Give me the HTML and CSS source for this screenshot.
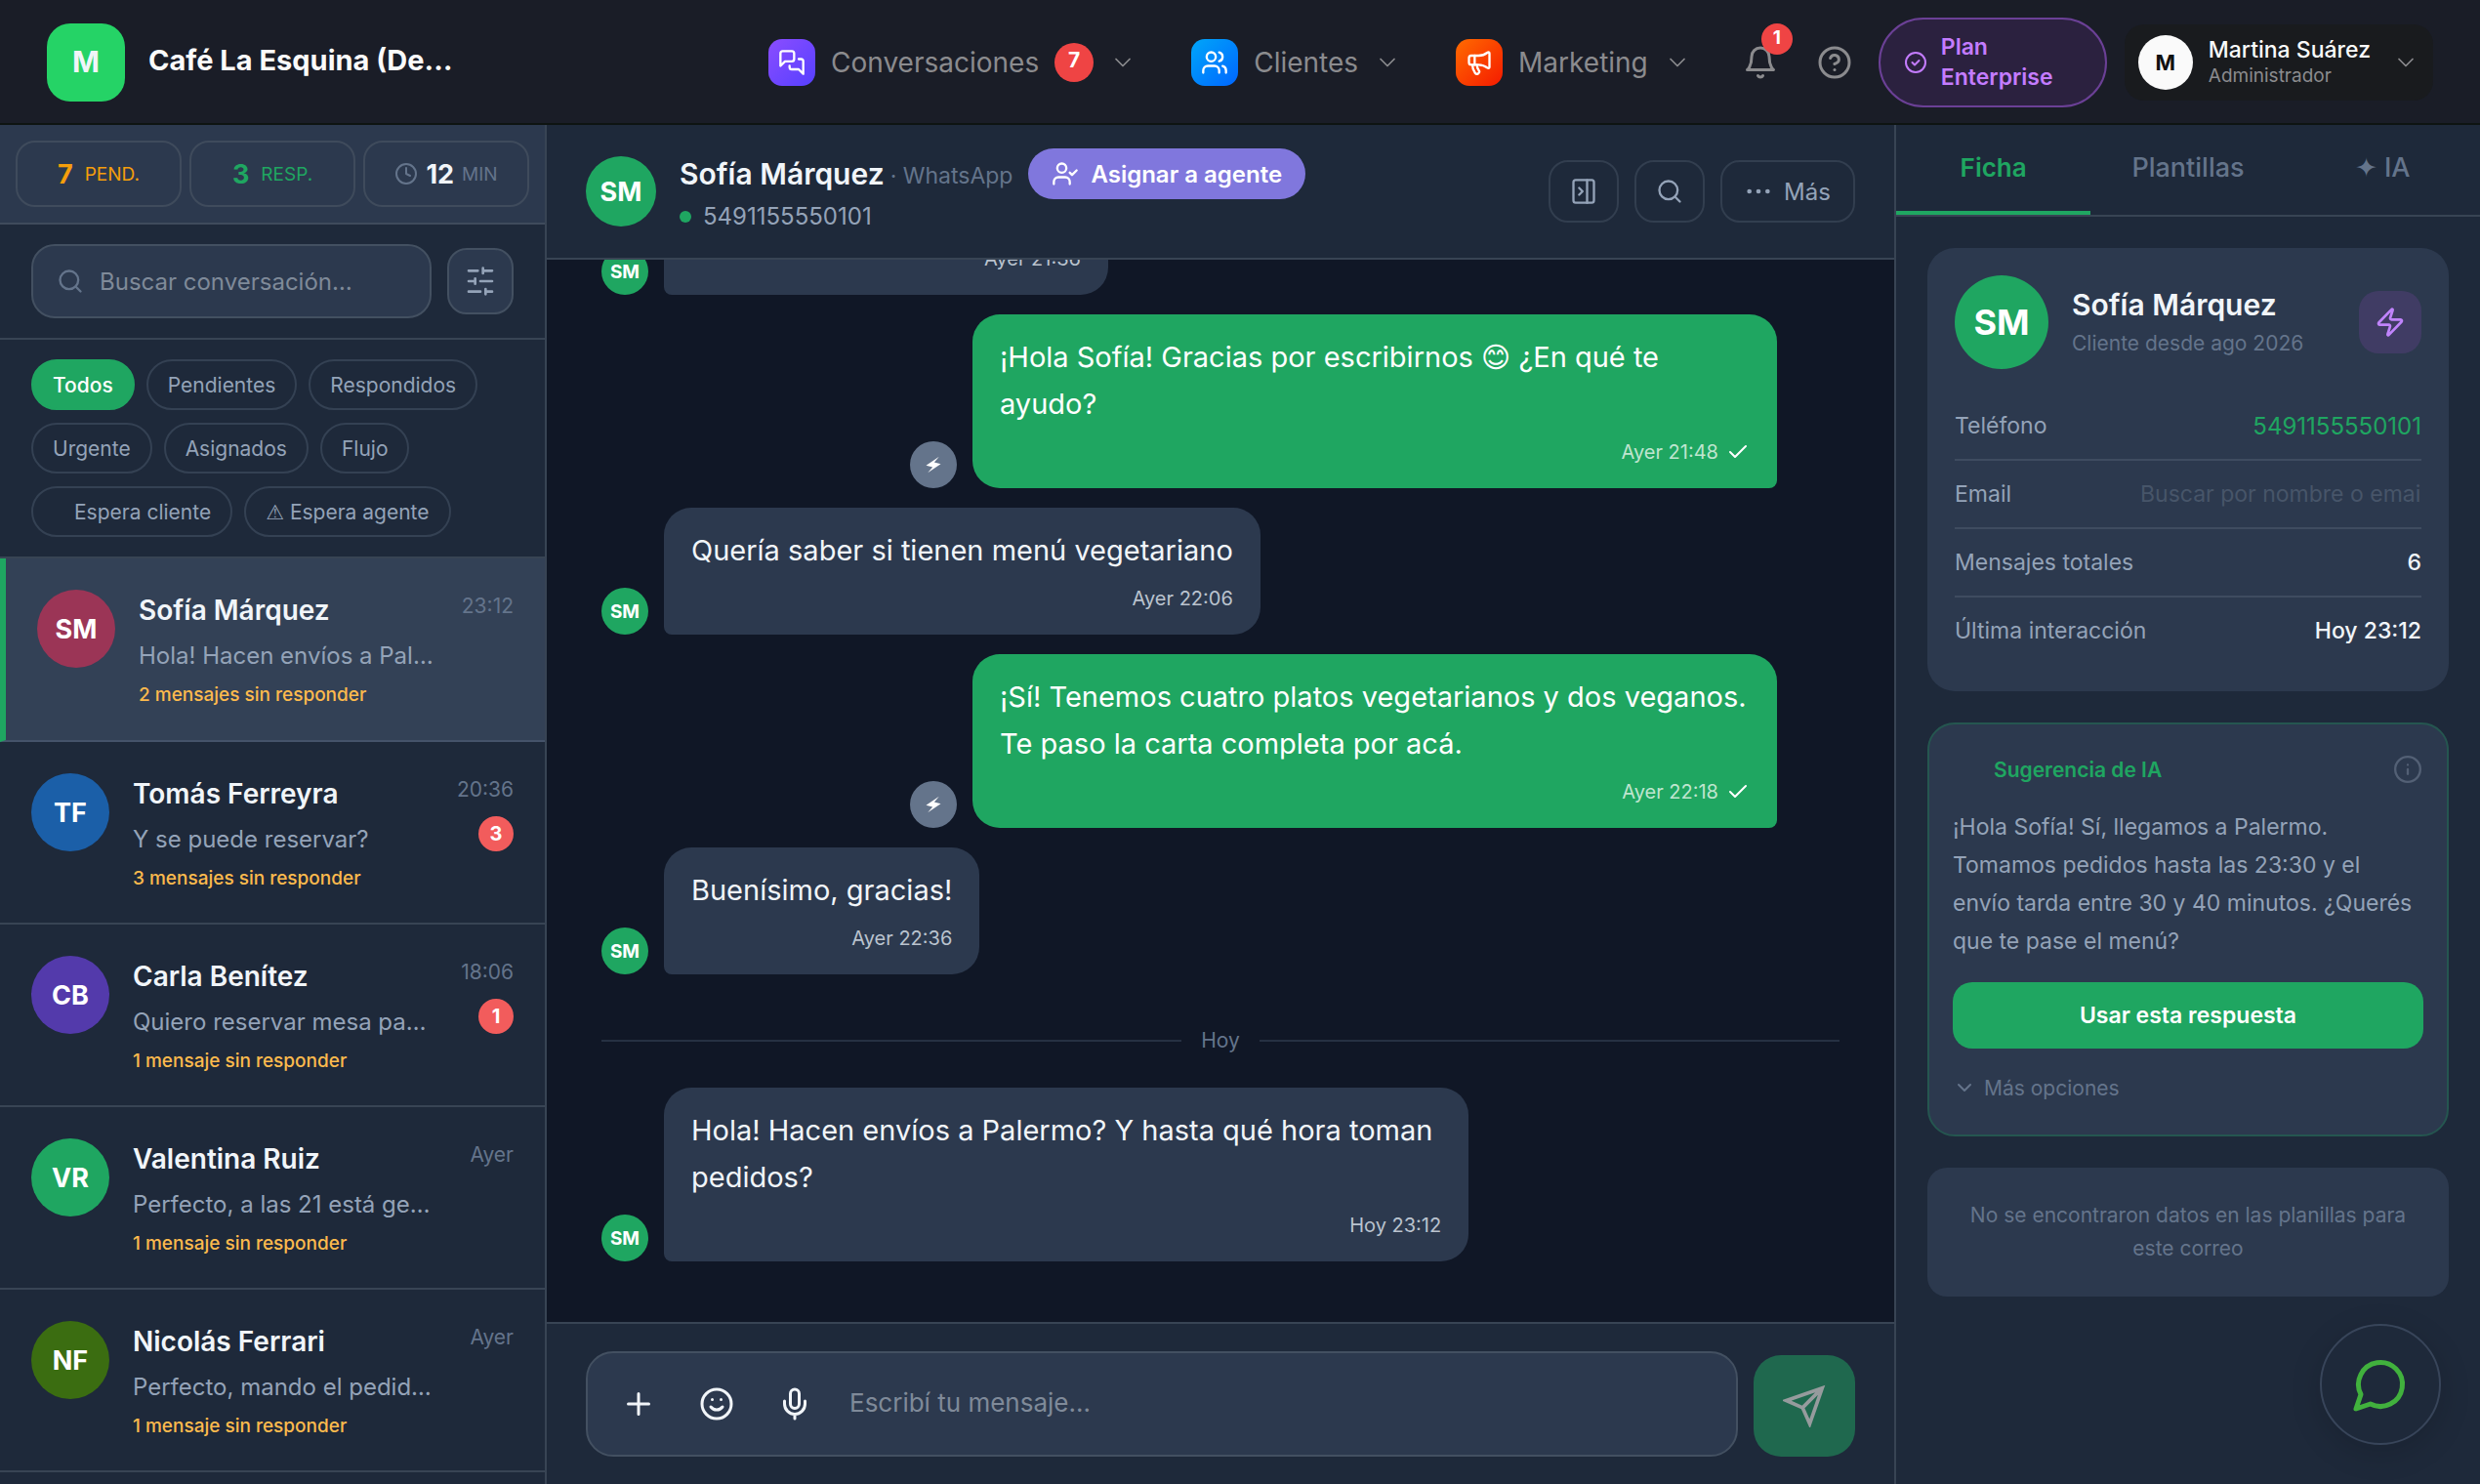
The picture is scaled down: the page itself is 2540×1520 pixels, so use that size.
FILE: index.html
```
<!DOCTYPE html>
<html lang="es">
<head>
    <meta charset="UTF-8">
    <meta name="viewport" content="width=device-width, initial-scale=1">
    <title>Conversaciones - Café La Esquina</title>
    <link rel="stylesheet" href="styles.css">
</head>
<body>
    <!-- iconos compartidos -->
    <svg class="sprite" aria-hidden="true">
        <symbol id="i-chevron" viewBox="0 0 24 24"><path d="m6 9 6 6 6-6"/></symbol>
        <symbol id="i-search" viewBox="0 0 24 24"><circle cx="11" cy="11" r="8"/><path d="m21 21-4.3-4.3"/></symbol>
        <symbol id="i-check" viewBox="0 0 24 24"><path d="M20 6 9 17l-5-5"/></symbol>
        <symbol id="i-bolt" viewBox="0 0 24 24"><path d="M4 14a1 1 0 0 1-.78-1.63l9.9-10.2a.5.5 0 0 1 .86.46l-1.92 6.02A1 1 0 0 0 13 10h7a1 1 0 0 1 .78 1.63l-9.9 10.2a.5.5 0 0 1-.86-.46l1.92-6.02A1 1 0 0 0 11 14z"/></symbol>
        <symbol id="i-flash" viewBox="0 0 24 24"><path d="M19 2 3 13l8 2-6 7L21 11l-8-2z"/></symbol>
    </svg>

    <header class="topbar">
        <div class="brand">
            <div class="brand-logo">M</div>
            <div class="brand-name">Café La Esquina (De…</div>
        </div>

        <nav class="nav">
            <button class="nav-item">
                <span class="nav-icon purple"><svg class="icon s28" viewBox="0 0 24 24"><path d="M14 9a2 2 0 0 1-2 2H6l-4 4V4a2 2 0 0 1 2-2h8a2 2 0 0 1 2 2z"/><path d="M18 9h2a2 2 0 0 1 2 2v11l-4-4h-6a2 2 0 0 1-2-2v-1"/></svg></span>
                <span>Conversaciones</span>
                <span class="nav-badge">7</span>
                <svg class="icon s28 thin"><use href="#i-chevron"/></svg>
            </button>
            <button class="nav-item">
                <span class="nav-icon blue"><svg class="icon s28" viewBox="0 0 24 24"><path d="M16 21v-2a4 4 0 0 0-4-4H6a4 4 0 0 0-4 4v2"/><circle cx="9" cy="7" r="4"/><path d="M22 21v-2a4 4 0 0 0-3-3.870"/><path d="M16 3.130a4 4 0 0 1 0 7.750"/></svg></span>
                <span>Clientes</span>
                <svg class="icon s28 thin"><use href="#i-chevron"/></svg>
            </button>
            <button class="nav-item">
                <span class="nav-icon orange"><svg class="icon s28" viewBox="0 0 24 24"><path d="M11 6a13 13 0 0 0 8.400-2.800A1 1 0 0 1 21 4v12a1 1 0 0 1-1.600.8A13 13 0 0 0 11 14H5a2 2 0 0 1-2-2V8a2 2 0 0 1 2-2z"/><path d="M6 14a12 12 0 0 0 2.400 7.200 2 2 0 0 0 3.200-2.400A8 8 0 0 1 10 14"/><path d="M8 6v8"/></svg></span>
                <span>Marketing</span>
                <svg class="icon s28 thin"><use href="#i-chevron"/></svg>
            </button>
        </nav>

        <div class="topbar-actions">
            <button class="top-icon" aria-label="Notificaciones">
                <svg class="icon s36" viewBox="0 0 24 24"><path d="M6 8a6 6 0 0 1 12 0c0 7 3 9 3 9H3s3-2 3-9"/><path d="M10.300 21a1.940 1.940 0 0 0 3.400 0"/></svg>
                <span class="bell-badge">1</span>
            </button>
            <button class="top-icon" aria-label="Ayuda">
                <svg class="icon s36" viewBox="0 0 24 24"><circle cx="12" cy="12" r="10"/><path d="M9.090 9a3 3 0 0 1 5.830 1c0 2-3 3-3 3"/><path d="M12 17h.01"/></svg>
            </button>
            <a href="#" class="plan">
                <svg class="icon s24" viewBox="0 0 24 24"><circle cx="12" cy="12" r="10"/><path d="m8.500 12 2.500 2.500 4.500-4.500"/></svg>
                <span>Plan<br>Enterprise</span>
            </a>
            <button class="profile">
                <span class="profile-avatar">M</span>
                <span class="profile-text">
                    <span class="profile-name">Martina Suárez</span>
                    <span class="profile-role">Administrador</span>
                </span>
                <svg class="icon s28 thin"><use href="#i-chevron"/></svg>
            </button>
        </div>
    </header>

    <div class="layout">
        <!-- lista de conversaciones -->
        <aside class="sidebar">
            <div class="stats">
                <div class="stat orange-text"><b>7</b><span>PEND.</span></div>
                <div class="stat green-text"><b>3</b><span>RESP.</span></div>
                <div class="stat min"><svg class="icon s24" viewBox="0 0 24 24"><circle cx="12" cy="12" r="10"/><path d="M12 6v6l4 2"/></svg><b>12</b><span>MIN</span></div>
            </div>

            <div class="search-row">
                <label class="search">
                    <svg class="icon s28"><use href="#i-search"/></svg>
                    <input type="text" placeholder="Buscar conversación…" aria-label="Buscar conversación">
                </label>
                <button class="filter-btn" aria-label="Filtros">
                    <svg class="icon s32" viewBox="0 0 24 24"><path d="M21 4h-7M10 4H3M21 12h-9M8 12H3M21 20h-5M12 20H3M14 2v4M8 10v4M16 18v4"/></svg>
                </button>
            </div>

            <div class="chips">
                <button class="chip active">Todos</button>
                <button class="chip">Pendientes</button>
                <button class="chip">Respondidos</button>
                <button class="chip">Urgente</button>
                <button class="chip">Asignados</button>
                <button class="chip">Flujo</button>
                <button class="chip chip-blank">Espera cliente</button>
                <button class="chip"><span class="emoji">⚠</span> Espera agente</button>
            </div>

            <div class="conv-list">
                <div class="conv selected">
                    <div class="avatar wine">SM</div>
                    <div class="conv-body">
                        <div class="conv-name">Sofía Márquez</div>
                        <div class="conv-preview">Hola! Hacen envíos a Pal…</div>
                        <div class="conv-warn">2 mensajes sin responder</div>
                    </div>
                    <div class="conv-side"><span>23:12</span></div>
                </div>
                <div class="conv">
                    <div class="avatar azul">TF</div>
                    <div class="conv-body">
                        <div class="conv-name">Tomás Ferreyra</div>
                        <div class="conv-preview">Y se puede reservar?</div>
                        <div class="conv-warn">3 mensajes sin responder</div>
                    </div>
                    <div class="conv-side"><span>20:36</span><span class="count">3</span></div>
                </div>
                <div class="conv">
                    <div class="avatar violeta">CB</div>
                    <div class="conv-body">
                        <div class="conv-name">Carla Benítez</div>
                        <div class="conv-preview">Quiero reservar mesa pa…</div>
                        <div class="conv-warn">1 mensaje sin responder</div>
                    </div>
                    <div class="conv-side"><span>18:06</span><span class="count">1</span></div>
                </div>
                <div class="conv">
                    <div class="avatar">VR</div>
                    <div class="conv-body">
                        <div class="conv-name">Valentina Ruiz</div>
                        <div class="conv-preview">Perfecto, a las 21 está ge…</div>
                        <div class="conv-warn">1 mensaje sin responder</div>
                    </div>
                    <div class="conv-side"><span>Ayer</span></div>
                </div>
                <div class="conv">
                    <div class="avatar oliva">NF</div>
                    <div class="conv-body">
                        <div class="conv-name">Nicolás Ferrari</div>
                        <div class="conv-preview">Perfecto, mando el pedid…</div>
                        <div class="conv-warn">1 mensaje sin responder</div>
                    </div>
                    <div class="conv-side"><span>Ayer</span></div>
                </div>
            </div>
        </aside>

        <!-- chat -->
        <main class="chat">
            <div class="chat-head">
                <div class="avatar head">SM</div>
                <div class="chat-who">
                    <div class="chat-title">
                        <h1>Sofía Márquez</h1>
                        <span class="channel">· WhatsApp</span>
                        <button class="assign"><svg class="icon s28" viewBox="0 0 24 24"><path d="M16 21v-2a4 4 0 0 0-4-4H6a4 4 0 0 0-4 4v2"/><circle cx="9" cy="7" r="4"/><path d="m16 11 2 2 4-4"/></svg>Asignar a agente</button>
                    </div>
                    <div class="chat-phone"><i class="dot"></i>5491155550101</div>
                </div>
                <div class="chat-tools">
                    <button class="tool" aria-label="Ocultar panel"><svg class="icon s28" viewBox="0 0 24 24"><rect x="3" y="2" width="18" height="20" rx="2"/><path d="M15 2v20M8 9l3 3-3 3"/></svg></button>
                    <button class="tool" aria-label="Buscar"><svg class="icon s28"><use href="#i-search"/></svg></button>
                    <button class="tool wide"><svg class="icon s28 heavy" viewBox="0 0 24 24"><path d="M4 12h.01M12 12h.01M20 12h.01"/></svg>Más</button>
                </div>
            </div>

            <div class="messages">
                <div class="msg in">
                    <div class="avatar mini">SM</div>
                    <div class="bubble">Hola! Están abiertos mañana!<div class="time">Ayer 21:36</div></div>
                </div>
                <div class="msg out">
                    <div class="avatar mini bot"><svg class="s20"><use href="#i-flash"/></svg></div>
                    <div class="bubble">¡Hola Sofía! Gracias por escribirnos <span class="emoji">😊</span> ¿En qué te ayudo?<div class="time">Ayer 21:48 <svg class="icon s24 tick"><use href="#i-check"/></svg></div></div>
                </div>
                <div class="msg in">
                    <div class="avatar mini">SM</div>
                    <div class="bubble">Quería saber si tienen menú vegetariano<div class="time">Ayer 22:06</div></div>
                </div>
                <div class="msg out">
                    <div class="avatar mini bot"><svg class="s20"><use href="#i-flash"/></svg></div>
                    <div class="bubble">¡Sí! Tenemos cuatro platos vegetarianos y dos veganos. Te paso la carta completa por acá.<div class="time">Ayer 22:18 <svg class="icon s24 tick"><use href="#i-check"/></svg></div></div>
                </div>
                <div class="msg in">
                    <div class="avatar mini">SM</div>
                    <div class="bubble">Buenísimo, gracias!<div class="time">Ayer 22:36</div></div>
                </div>
                <div class="day">Hoy</div>
                <div class="msg in">
                    <div class="avatar mini">SM</div>
                    <div class="bubble">Hola! Hacen envíos a Palermo? Y hasta qué hora toman pedidos?<div class="time">Hoy 23:12</div></div>
                </div>
            </div>

            <form class="composer">
                <div class="composer-box">
                    <button type="button" aria-label="Adjuntar"><svg class="icon s36" viewBox="0 0 24 24"><path d="M5 12h14M12 5v14"/></svg></button>
                    <button type="button" aria-label="Emojis"><svg class="icon s36" viewBox="0 0 24 24"><circle cx="12" cy="12" r="10"/><path d="M8 14s1.500 2 4 2 4-2 4-2M9 9h.01M15 9h.01"/></svg></button>
                    <button type="button" aria-label="Grabar audio"><svg class="icon s36" viewBox="0 0 24 24"><rect x="9" y="2" width="6" height="13" rx="3"/><path d="M19 10v2a7 7 0 0 1-14 0v-2M12 19v3"/></svg></button>
                    <input type="text" placeholder="Escribí tu mensaje…" aria-label="Mensaje">
                </div>
                <button type="submit" class="send" aria-label="Enviar"><svg class="icon s44" viewBox="0 0 24 24"><path class="sharp" d="M22 2 11 13M22 2l-7 20-4-9-9-4z"/></svg></button>
            </form>
        </main>

        <!-- ficha del cliente -->
        <aside class="panel">
            <div class="tabs">
                <button class="tab active">Ficha</button>
                <button class="tab">Plantillas</button>
                <button class="tab">✦ IA</button>
            </div>
            <div class="panel-body">
                <section class="card client">
                    <div class="client-head">
                        <div class="avatar big">SM</div>
                        <div class="client-text">
                            <h2>Sofía Márquez</h2>
                            <p>Cliente desde ago 2026</p>
                        </div>
                        <button class="bolt-btn" aria-label="Acciones rápidas"><svg class="icon s32"><use href="#i-bolt"/></svg></button>
                    </div>
                    <div class="row"><span>Teléfono</span><a href="#">5491155550101</a></div>
                    <div class="row"><label for="email">Email</label><input id="email" type="text" placeholder="Buscar por nombre o email"></div>
                    <div class="row"><span>Mensajes totales</span><strong>6</strong></div>
                    <div class="row"><span>Última interacción</span><strong>Hoy 23:12</strong></div>
                </section>

                <section class="card ai">
                    <div class="ai-head">
                        <h3>Sugerencia de IA</h3>
                        <svg class="icon s28" viewBox="0 0 24 24"><circle cx="12" cy="12" r="11"/><path d="M12 16v-4M12 8h.01"/></svg>
                    </div>
                    <p>¡Hola Sofía! Sí, llegamos a Palermo. Tomamos pedidos hasta las 23:30 y el envío tarda entre 30 y 40 minutos. ¿Querés que te pase el menú?</p>
                    <button class="use-btn">Usar esta respuesta</button>
                    <button class="more-btn"><svg class="icon s24"><use href="#i-chevron"/></svg>Más opciones</button>
                </section>

                <section class="card empty">No se encontraron datos en las planillas para este correo</section>
            </div>
        </aside>
    </div>

    <button class="fab" aria-label="Abrir chat de soporte">
        <svg class="icon s60" viewBox="0 0 24 24"><path d="M7.900 20A9 9 0 1 0 4 16.100L2 22z"/></svg>
    </button>
</body>
</html>
```
FILE: styles.css
```
:root {
    --bg: #101726;
    --surface: #1e293a;
    --card: #2c394e;
    --line: #384454;
    --text: #f1f5f9;
    --muted: #94a3b8;
    --dim: #64748b;
    --green: #1fa661;
}

* {
    box-sizing: border-box;
}

body {
    margin: 0;
    height: 100vh;
    display: flex;
    flex-direction: column;
    overflow: hidden;
    background: var(--bg);
    color: var(--text);
    font-family: Inter, "Liberation Sans", "DejaVu Sans", sans-serif;
    font-size: 24px;
}

button, input {
    font: inherit;
    color: inherit;
    background: none;
    border: none;
    padding: 0;
    outline: none;
}

button {
    cursor: pointer;
}

a {
    text-decoration: none;
}

h1, h2, h3, p {
    margin: 0;
}

.sprite {
    position: absolute;
    width: 0;
    height: 0;
}

.icon {
    fill: none;
    stroke: currentColor;
    stroke-width: 2;
    stroke-linecap: round;
    stroke-linejoin: round;
    flex-shrink: 0;
}

.thin { stroke-width: 1.5; }
.heavy { stroke-width: 4; }
.sharp { stroke-linecap: butt; stroke-linejoin: miter; }
.s20 { width: 20px; height: 20px; fill: #fff; }
.s24 { width: 24px; height: 24px; }
.s28 { width: 28px; height: 28px; }
.s32 { width: 32px; height: 32px; }
.s36 { width: 36px; height: 36px; }
.s44 { width: 44px; height: 44px; }
.s60 { width: 60px; height: 60px; }

/* barra superior */
.topbar {
    height: 128px;
    flex-shrink: 0;
    display: flex;
    align-items: center;
    padding: 2px 48px 0;
    background: #1a1d27;
    border-bottom: 2px solid #0e1412;
}

.brand {
    display: flex;
    align-items: center;
    gap: 24px;
    margin-right: auto;
}

.brand-logo {
    width: 80px;
    height: 80px;
    border-radius: 24px;
    background: #25d366;
    display: flex;
    align-items: center;
    justify-content: center;
    padding-bottom: 2px;
    font-size: 30px;
    font-weight: 700;
}

.brand-name {
    font-size: 29px;
    font-weight: 700;
    line-height: 40px;
    color: #fafafa;
    white-space: nowrap;
    padding-bottom: 4px;
}

.nav {
    display: flex;
    gap: 56px;
    margin-right: 40px;
}

.nav-item {
    display: flex;
    align-items: center;
    gap: 16px;
    font-size: 28px;
    color: #8b8b8e;
}

.nav-icon {
    width: 48px;
    height: 48px;
    border-radius: 14px;
    display: flex;
    align-items: center;
    justify-content: center;
    color: #fff;
}

.purple { background: linear-gradient(135deg, #8b4dff, #5640ff); }
.blue { background: linear-gradient(135deg, #00a6f9, #0066ff); }
.orange { background: linear-gradient(135deg, #ff6b00, #f51a00); }

.nav-badge {
    width: 40px;
    height: 40px;
    border-radius: 50%;
    background: #ef4444;
    color: #fff;
    font-size: 21px;
    font-weight: 700;
    line-height: 36px;
}

.topbar-actions {
    display: flex;
    align-items: center;
    gap: 14px;
    color: #8b8b8e;
}

.top-icon {
    position: relative;
    width: 62px;
    height: 64px;
    display: flex;
    align-items: center;
    justify-content: center;
}

.bell-badge {
    position: absolute;
    top: -8px;
    right: -2px;
    width: 32px;
    height: 32px;
    border-radius: 50%;
    background: #ef4444;
    color: #fff;
    font-size: 19px;
    font-weight: 700;
    line-height: 29px;
}

.plan {
    width: 234px;
    height: 92px;
    display: flex;
    align-items: center;
    gap: 14px;
    padding: 0 24px;
    border: 2px solid #6b4096;
    border-radius: 46px;
    background: #2b213f;
    color: #c47cff;
    font-weight: 600;
    font-size: 23px;
    line-height: 31px;
}

.profile {
    display: flex;
    align-items: center;
    gap: 16px;
    height: 78px;
    margin-left: 4px;
    padding: 0 14px;
    border-radius: 20px;
    background: #191b1e;
}

.profile .thin {
    margin-left: 6px;
}

.profile-avatar {
    width: 56px;
    height: 56px;
    border-radius: 50%;
    background: #fafafa;
    color: #111;
    font-weight: 700;
    font-size: 22px;
    line-height: 56px;
}

.profile-text {
    display: flex;
    flex-direction: column;
    text-align: left;
}

.profile-name {
    color: #fafafa;
    font-weight: 500;
    font-size: 23px;
    line-height: 28px;
}

.profile-role {
    font-size: 19px;
    line-height: 26px;
}

.layout {
    flex: 1;
    min-height: 0;
    display: grid;
    grid-template-columns: 560px 1fr 600px;
}

/* lista */
.sidebar {
    display: flex;
    flex-direction: column;
    min-height: 0;
    overflow: hidden;
    background: var(--surface);
    border-right: 2px solid var(--line);
}

.stats {
    display: grid;
    grid-template-columns: repeat(3, 1fr);
    gap: 8px;
    padding: 16px;
    background: var(--card);
    border-bottom: 2px solid #3f4b5c;
}

.stat {
    height: 68px;
    display: flex;
    align-items: center;
    justify-content: center;
    gap: 12px;
    border: 2px solid #3f4b5c;
    border-radius: 20px;
    font-size: 19px;
}

.stat b { font-size: 27px; }
.stat.min { gap: 8px; color: var(--dim); }
.stat.min b { color: var(--text); }
.orange-text { color: #f59e0b; }
.green-text { color: var(--green); }

.search-row {
    display: flex;
    align-items: center;
    gap: 16px;
    padding: 20px 32px;
    border-bottom: 2px solid var(--line);
}

.search {
    flex: 1;
    min-width: 0;
    height: 76px;
    display: flex;
    align-items: center;
    gap: 16px;
    padding: 0 24px;
    border: 2px solid #435061;
    border-radius: 24px;
    background: var(--card);
    color: var(--dim);
}

.search input {
    flex: 1;
    min-width: 0;
}

input::placeholder {
    color: #7f8a99;
    opacity: 1;
}

.filter-btn {
    width: 68px;
    height: 68px;
    display: flex;
    align-items: center;
    justify-content: center;
    border: 2px solid #435061;
    border-radius: 20px;
    background: var(--card);
    color: var(--muted);
}

.chips {
    display: flex;
    flex-wrap: wrap;
    gap: 13px 12px;
    padding: 20px 32px;
    border-bottom: 2px solid var(--line);
}

.chip {
    height: 52px;
    padding: 0 20px;
    border: 2px solid #344153;
    border-radius: 26px;
    font-size: 21px;
    color: var(--muted);
}

.chip.active {
    background: var(--green);
    border-color: var(--green);
    color: #fff;
    font-weight: 500;
}

.chip-blank {
    padding-left: 42px;
}

.avatar {
    width: 80px;
    height: 80px;
    flex-shrink: 0;
    display: flex;
    align-items: center;
    justify-content: center;
    border-radius: 50%;
    background: var(--green);
    color: #fff;
    font-size: 27px;
    font-weight: 700;
}

.avatar.wine { background: #9b3556; }
.avatar.azul { background: #1b5fa8; }
.avatar.violeta { background: #533aab; }
.avatar.oliva { background: #3b6d11; }
.avatar.head { width: 72px; height: 72px; }
.avatar.mini { width: 48px; height: 48px; font-size: 19px; }
.avatar.bot { background: #64748b; }
.avatar.big { width: 96px; height: 96px; font-size: 36px; }

.conv {
    height: 187px;
    display: flex;
    gap: 24px;
    padding: 32px;
    border-bottom: 2px solid var(--line);
}

.conv.selected {
    height: 188px;
    background: #334156;
    border-left: 6px solid var(--green);
    border-bottom-color: #45536a;
}

.conv-body {
    flex: 1;
    min-width: 0;
    white-space: nowrap;
}

.conv-name {
    font-size: 28px;
    font-weight: 600;
    line-height: 42px;
}

.conv-preview {
    margin-top: 6px;
    line-height: 40px;
    color: var(--muted);
}

.conv-warn {
    margin-top: 3px;
    font-size: 19px;
    font-weight: 500;
    line-height: 34px;
    color: #fdba4d;
}

.conv-side {
    display: flex;
    flex-direction: column;
    align-items: flex-end;
    gap: 10px;
    font-size: 21px;
    line-height: 34px;
    color: var(--dim);
}

.count {
    width: 36px;
    height: 36px;
    border-radius: 50%;
    background: #f25c5c;
    color: #fff;
    font-size: 20px;
    font-weight: 700;
    line-height: 36px;
    text-align: center;
}

/* chat */
.chat {
    display: flex;
    flex-direction: column;
    min-width: 0;
    min-height: 0;
}

.chat-head {
    height: 138px;
    flex-shrink: 0;
    display: flex;
    align-items: center;
    gap: 24px;
    padding: 0 40px;
    background: var(--surface);
    border-bottom: 2px solid var(--line);
}

.chat-who {
    flex: 1;
}

.chat-title {
    display: flex;
    align-items: center;
    white-space: nowrap;
}

.chat-title h1 {
    font-size: 30px;
    font-weight: 600;
    line-height: 52px;
}

.channel {
    margin: 4px 16px 0 6px;
    font-size: 23px;
    color: var(--dim);
}

.assign {
    height: 52px;
    display: flex;
    align-items: center;
    gap: 12px;
    padding: 0 24px;
    border-radius: 26px;
    background: #8077dd;
    color: #fff;
    font-weight: 600;
}

.chat-phone {
    display: flex;
    align-items: center;
    gap: 12px;
    line-height: 36px;
    color: var(--muted);
}

.dot {
    width: 12px;
    height: 12px;
    border-radius: 50%;
    background: var(--green);
}

.chat-tools {
    display: flex;
    gap: 16px;
}

.tool {
    width: 72px;
    height: 64px;
    display: flex;
    align-items: center;
    justify-content: center;
    gap: 12px;
    border: 2px solid #323e4f;
    border-radius: 20px;
    color: var(--muted);
}

.tool.wide {
    width: 138px;
}

.messages {
    flex: 1;
    min-height: 0;
    overflow: hidden;
    display: flex;
    flex-direction: column;
    justify-content: flex-end;
    gap: 20px;
    padding: 0 56px 62px;
}

.msg {
    display: flex;
    align-items: flex-end;
    gap: 16px;
}

.msg.out {
    justify-content: flex-end;
    padding-right: 64px;
}

.bubble {
    max-width: 65%;
    padding: 20px 28px;
    border-radius: 28px;
    font-size: 29px;
    line-height: 48px;
    background: var(--card);
}

.in .bubble {
    border-bottom-left-radius: 8px;
}

.out .bubble {
    max-width: 824px;
    border-bottom-right-radius: 8px;
    background: var(--green);
    color: #fff;
}

.emoji {
    font-family: "DejaVu Sans", sans-serif;
    line-height: 1;
}

.time {
    display: flex;
    align-items: center;
    justify-content: flex-end;
    gap: 8px;
    margin-top: 8px;
    font-size: 20px;
    line-height: 34px;
    color: #bac3ce;
}

.out .time {
    color: #bfe5cf;
}

.tick {
    color: #fff;
}

.day {
    display: flex;
    align-items: center;
    gap: 20px;
    margin: 32px 0 12px;
    font-size: 21px;
    line-height: 32px;
    color: var(--dim);
}

.day::before,
.day::after {
    content: "";
    flex: 1;
    height: 2px;
    background: #263142;
}

.composer {
    height: 166px;
    flex-shrink: 0;
    display: flex;
    gap: 16px;
    padding: 28px 40px;
    align-items: flex-end;
    background: var(--surface);
    border-top: 2px solid var(--line);
}

.composer-box {
    flex: 1;
    min-width: 0;
    height: 108px;
    display: flex;
    align-items: center;
    gap: 16px;
    padding: 0 20px;
    border: 2px solid #435061;
    border-radius: 28px;
    background: var(--card);
}

.composer-box button {
    width: 64px;
    height: 64px;
    display: flex;
    align-items: center;
    justify-content: center;
}

.composer-box input {
    flex: 1;
    min-width: 0;
    padding: 0 0 4px 8px;
    font-size: 26px;
}

.send {
    width: 104px;
    height: 104px;
    display: flex;
    align-items: center;
    justify-content: center;
    border-radius: 28px;
    background: #1f684e;
    color: #969b9d;
}

/* panel derecho */
.panel {
    min-height: 0;
    overflow: hidden;
    background: var(--surface);
    border-left: 2px solid var(--line);
}

.tabs {
    display: grid;
    grid-template-columns: repeat(3, 1fr);
    border-bottom: 2px solid var(--line);
}

.tab {
    height: 92px;
    padding-bottom: 2px;
    font-size: 27px;
    font-weight: 500;
    color: var(--dim);
    border-bottom: 4px solid transparent;
}

.tab.active {
    font-size: 26px;
    color: var(--green);
    font-weight: 600;
    border-bottom-color: var(--green);
}

.panel-body {
    display: flex;
    flex-direction: column;
    gap: 32px;
    padding: 32px;
}

.card {
    background: var(--card);
    border-radius: 28px;
}

.client {
    padding: 28px;
}

.client-head {
    display: flex;
    align-items: center;
    gap: 24px;
    margin-bottom: 24px;
}

.client-text {
    flex: 1;
}

.client-text h2 {
    font-size: 30px;
    font-weight: 600;
    line-height: 44px;
}

.client-text p {
    font-size: 21px;
    line-height: 36px;
    color: var(--dim);
}

.bolt-btn {
    width: 64px;
    height: 64px;
    display: flex;
    align-items: center;
    justify-content: center;
    border-radius: 20px;
    background: #403c64;
    color: #c084fc;
}

.row {
    height: 70px;
    display: flex;
    align-items: center;
    justify-content: space-between;
    border-bottom: 2px solid #3f4c60;
    font-size: 23px;
    color: var(--muted);
}

.row:last-child {
    height: 68px;
    border-bottom: none;
}

.row a {
    font-size: 24px;
    color: var(--green);
}

.row strong {
    font-weight: 500;
    color: var(--text);
}

.row input {
    width: 288px;
}

.row input::placeholder {
    color: #475569;
}

.ai {
    padding: 24px;
    border: 2px solid #255650;
}

.ai-head {
    display: flex;
    align-items: center;
    justify-content: space-between;
    padding: 0 2px 0 42px;
    margin-bottom: 18px;
    height: 44px;
    color: #536075;
}

.ai-head h3 {
    font-size: 21px;
    font-weight: 600;
    color: var(--green);
}

.ai p {
    margin-bottom: 22px;
    font-size: 23px;
    line-height: 39px;
    color: var(--muted);
}

.use-btn {
    width: 100%;
    height: 68px;
    border-radius: 20px;
    background: var(--green);
    color: #fff;
    font-size: 23px;
    font-weight: 600;
}

.more-btn {
    display: flex;
    align-items: center;
    gap: 8px;
    height: 48px;
    margin-top: 16px;
    font-size: 21px;
    color: var(--dim);
}

.empty {
    padding: 32px;
    border-radius: 20px;
    text-align: center;
    font-size: 21px;
    line-height: 34px;
    color: var(--dim);
}

.fab {
    position: fixed;
    right: 40px;
    bottom: 40px;
    width: 124px;
    height: 124px;
    display: flex;
    align-items: center;
    justify-content: center;
    border: 2px solid #38455a;
    border-radius: 50%;
    background: var(--surface);
    color: #41b13d;
    box-shadow: 0 8px 32px rgba(0, 0, 0, 0.15);
}
```
